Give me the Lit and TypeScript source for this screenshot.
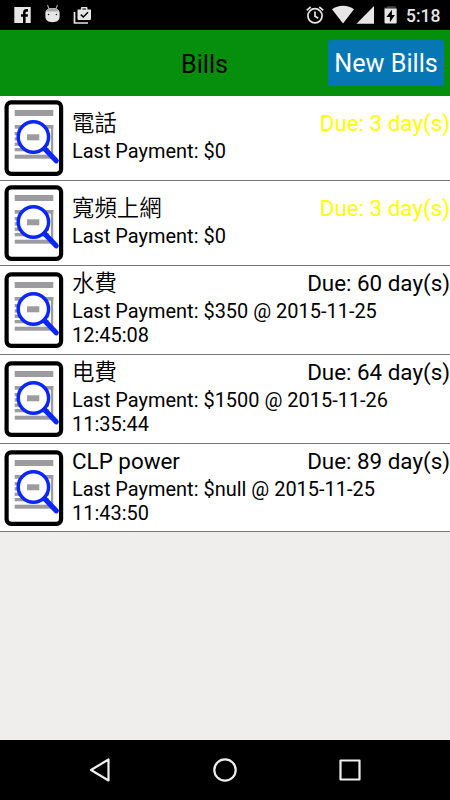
import { LitElement, html, css, svg } from "lit";
import { customElement, property } from "lit/decorators.js";
import { classMap } from "lit/directives/class-map.js";

interface Bill {
  name: string;
  due: number;
  payment: string;
  time?: string;
}

const bills: Bill[] = [
  { name: "電話", due: 3, payment: "$0" },
  { name: "寬頻上網", due: 3, payment: "$0" },
  { name: "水費", due: 60, payment: "$350 @ 2015-11-25", time: "12:45:08" },
  { name: "电費", due: 64, payment: "$1500 @ 2015-11-26", time: "11:35:44" },
  { name: "CLP power", due: 89, payment: "$null @ 2015-11-25", time: "11:43:50" },
];

@customElement("status-bar")
class StatusBar extends LitElement {
  static styles = css`
    :host {
      display: flex;
      justify-content: space-between;
      height: 30px;
      background: #000;
      color: #e6e6e6;
    }
    svg { display: block; }
    .right { display: flex; }
    .clock {
      width: 44px;
      font: 500 17.5px/32px Roboto, sans-serif;
      white-space: nowrap;
    }
  `;
  render() {
    return html`
      <svg width="100" height="30" viewBox="0 0 100 30" fill="#e6e6e6">
        <rect x="14.3" y="7" width="16.4" height="16" />
        <path d="M23 23v-6.2h-2v-2.6h2v-1.4c0-2.5 1.2-3.8 3.4-3.8h1.6v2.7h-1.2c-.9 0-1.2.4-1.2 1.2v1.3h2.4l-.3 2.6h-2.1V23z" fill="#000" />
        <path d="M47.5 5l1.6 4M57.5 5l-1.6 4" stroke="#aaa" stroke-width="1.1" />
        <path d="M45.4 13c0-3.2 3-5 7.1-5s7.1 1.800 7.100 5v3.500c0 3.800-2.800 5.700-7.100 5.700s-7.100-1.900-7.100-5.700z" />
        <path d="M46 11.500c1-2.300 3.300-3.500 6.500-3.500s5.500 1.200 6.500 3.500z" fill="#aaa" />
        <circle cx="48.600" cy="14.500" r=".8" fill="#222" /><circle cx="56.400" cy="14.500" r=".8" fill="#222" />
        <path d="M74.500 12v11h13.500" fill="none" stroke="#e6e6e6" stroke-width="1.700" />
        <path fill-rule="evenodd" d="M77.500 9.500h3.400V8.300c0-.7.500-1.200 1.200-1.200h4.200c.7 0 1.200.5 1.200 1.200v1.200h3.500v9.300c0 .8-.6 1.300-1.300 1.300H78.800c-.7 0-1.300-.5-1.300-1.300zM82.400 8.600v.9h3.600v-.9z" />
        <path d="M80.800 14.600l2.500 2.400 4.700-4.700" fill="none" stroke="#000" stroke-width="1.500" />
      </svg>
      <div class="right">
        <svg width="106" height="30" viewBox="300 0 106 30" fill="#e6e6e6">
          <g fill="none" stroke="#e6e6e6" stroke-width="1.700">
            <circle cx="315" cy="15.800" r="7.100" />
            <path d="M306.700 10.300l4-3.300M323.300 10.300l-4-3.300M315 11.500v4.800l3.300 2" />
          </g>
          <path d="M343 23.500L332 9.300c3-2.300 6.700-3.600 11-3.600s8 1.300 11 3.600z" />
          <path d="M374 6v17.700h-17.500z" />
          <path d="M387 6.200h8.800v2.300h-11.500V7.400h2.700z" fill="#444" />
          <path d="M384.500 8.500h12.200v14a1 1 0 0 1-1 1h-10.200a1 1 0 0 1-1-1z" />
          <path d="M391.900 9.700l-5.500 7.200h3.500v5.300l5-7.300h-3z" fill="#000" />
        </svg>
        <div class="clock">5:18</div>
      </div>
    `;
  }
}

@customElement("bill-row")
class BillRow extends LitElement {
  @property({ attribute: false }) bill!: Bill;
  static styles = css`
    :host { display: block; }
    .row {
      box-sizing: border-box;
      display: flex;
      align-items: flex-start;
      height: 85px;
      background: #fff;
      border-bottom: 1px solid #777;
      color: #000;
    }
    .tall { height: 89px; }
    :host(:last-child) .tall { height: 88px; }
    svg { display: block; flex: none; width: 72px; height: 78px; margin-top: 3px; }
    .tall svg { margin-top: 5px; }
    .body { flex: 1; min-width: 0; padding-top: 12px; }
    .tall .body { padding-top: 2px; }
    .top { display: flex; justify-content: space-between; height: 29px; }
    .name, .due {
      font: 22.4px/30px Roboto, "Noto Sans CJK TC", sans-serif;
      white-space: nowrap;
    }
    .cjk { font-weight: 350; }
    .soon { color: #ff0; }
    .detail { font: 19.97px/23.5px Roboto, sans-serif; padding-top: 3px; }
  `;
  render() {
    const b = this.bill;
    const cjk = /[\u4e00-\u9fff]/.test(b.name);
    return html`
      <div class=${classMap({ row: true, tall: !!b.time })}>
        <svg viewBox="0 0 72 78">
          <rect x="6.600" y="3.300" width="54.500" height="71.500" rx="4.500" fill="#fff" stroke="#000" stroke-width="4.200" />
          <g fill="#9c9c9f">
            <rect x="14.700" y="11" width="38.600" height="6" />
            <rect x="14.700" y="26" width="38.600" height="3.700" />
            <rect x="51" y="26" width="2.200" height="31" />
            ${[33, 38.3, 43.6, 49].map((y) => svg`<rect x="14.700" y=${y} width="34" height="3.300" />`)}
            <rect x="14.700" y="55.700" width="38.600" height="4" />
          </g>
          <circle cx="33.400" cy="38" r="15.200" fill="#fff" stroke="#0a26ff" stroke-width="3.500" />
          <rect x="27" y="35.300" width="12.300" height="6" fill="#9c9c9f" />
          <path d="M44.700 49.800L56.200 61.800" stroke="#0a26ff" stroke-width="5.200" stroke-linecap="round" />
        </svg>
        <div class="body">
          <div class="top">
            <div class=${classMap({ name: true, cjk })}>${b.name}</div>
            <div class=${classMap({ due: true, soon: b.due < 7 })}>Due: ${b.due} day(s)</div>
          </div>
          <div class="detail">Last Payment: ${b.payment}${b.time ? html`<br />${b.time}` : ""}</div>
        </div>
      </div>
    `;
  }
}

@customElement("app-root")
class AppRoot extends LitElement {
  static styles = css`
    :host {
      display: flex;
      flex-direction: column;
      height: 800px;
      width: 450px;
      overflow: hidden;
      background: #efeeec;
      font-family: Roboto, sans-serif;
    }
    .header {
      display: grid;
      grid-template-columns: 181px auto 1fr;
      align-items: center;
      box-sizing: border-box;
      height: 66px;
      padding: 0 6px 0 0;
      background: #068f0c;
    }
    .title { grid-column: 2; font-size: 25.2px; line-height: 30px; padding-top: 4px; }
    .new {
      grid-column: 3;
      justify-self: end;
      width: 116px;
      height: 46px;
      padding: 2px 0 0;
      border: 0;
      border-radius: 3px;
      background: #0676b4;
      color: #fff;
      font: 25.2px/44px Roboto, sans-serif;
      white-space: nowrap;
    }
    .list { flex: 1; }
    .nav {
      display: flex;
      justify-content: space-between;
      align-items: center;
      height: 60px;
      padding: 0 87px;
      background: #000;
    }
    .nav svg { width: 26px; height: 26px; fill: none; stroke: #eee; stroke-width: 2.2; stroke-linejoin: round; }
  `;
  render() {
    return html`
      <status-bar></status-bar>
      <div class="header">
        <div class="title">Bills</div>
        <button class="new">New Bills</button>
      </div>
      <div class="list">${bills.map((b) => html`<bill-row .bill=${b}></bill-row>`)}</div>
      <div class="nav">
        <svg viewBox="0 0 26 26"><path d="M21.500 2.500v21L4 13z" /></svg>
        <svg viewBox="0 0 26 26"><circle cx="13" cy="13" r="10.700" /></svg>
        <svg viewBox="0 0 26 26"><rect x="3.500" y="3.500" width="19" height="19" /></svg>
      </div>
    `;
  }
}
